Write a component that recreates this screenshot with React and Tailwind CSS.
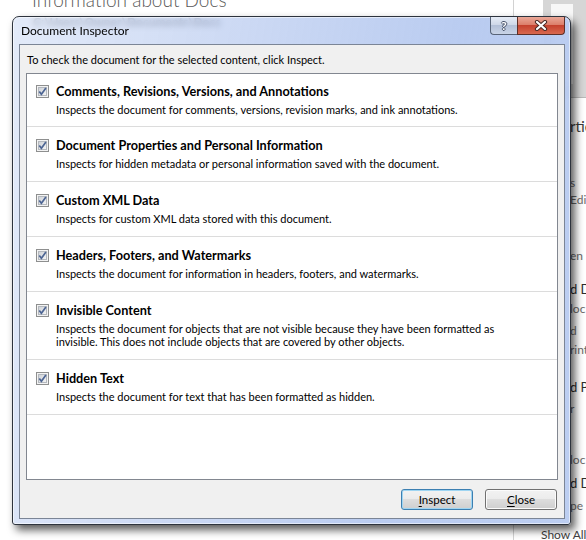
import React from 'react';

const items = [
  {
    title: 'Comments, Revisions, Versions, and Annotations',
    desc: ['Inspects the document for comments, versions, revision marks, and ink annotations.'],
  },
  {
    title: 'Document Properties and Personal Information',
    desc: ['Inspects for hidden metadata or personal information saved with the document.'],
  },
  {
    title: 'Custom XML Data',
    desc: ['Inspects for custom XML data stored with this document.'],
  },
  {
    title: 'Headers, Footers, and Watermarks',
    desc: ['Inspects the document for information in headers, footers, and watermarks.'],
  },
  {
    title: 'Invisible Content',
    desc: [
      'Inspects the document for objects that are not visible because they have been formatted as',
      'invisible. This does not include objects that are covered by other objects.',
    ],
  },
  {
    title: 'Hidden Text',
    desc: ['Inspects the document for text that has been formatted as hidden.'],
  },
];

// fragments of the backstage "Properties" column peeking out right of the dialog
const fragments = [
  { text: 'rtie', mt: 'mt-[20px]', cls: 'text-[15px] text-[#3c3c3c]' },
  { text: 's', mt: 'mt-[41px]', cls: 'text-[12px] text-[#6a6a6a]' },
  { text: 'Edi', mt: 'mt-[1px]', cls: 'text-[12px] text-[#6a6a6a]' },
  { text: 'en', mt: 'mt-[40px]', cls: 'text-[12px] text-[#6a6a6a]' },
  { text: 'd D', mt: 'mt-[17px]', cls: 'text-[13px] text-[#2e2e2e]' },
  { text: 'loc', mt: 'mt-[4px]', cls: 'text-[12px] text-[#6a6a6a]' },
  { text: 'd', mt: 'mt-[6px]', cls: 'text-[12px] text-[#6a6a6a]' },
  { text: 'rint', mt: 'mt-[3px]', cls: 'text-[12px] text-[#6a6a6a]' },
  { text: 'd P', mt: 'mt-[21px]', cls: 'text-[13px] text-[#2e2e2e]' },
  { text: 'r', mt: 'mt-[6px]', cls: 'text-[12px] text-[#6a6a6a]' },
  { text: 'loc', mt: 'mt-[35px]', cls: 'text-[12px] text-[#6a6a6a]' },
  { text: 'd D', mt: 'mt-[7px]', cls: 'text-[13px] text-[#2e2e2e]' },
  { text: 'pe', mt: 'mt-[7px]', cls: 'text-[12px] text-[#6a6a6a]' },
];

function CheckBox() {
  return (
    <svg width="13" height="13" viewBox="0 0 13 13" className="shrink-0">
      <defs>
        <linearGradient id="cbfill" x1="0" y1="0" x2="1" y2="1">
          <stop offset="0" stopColor="#cdd1d6" />
          <stop offset="1" stopColor="#f6f6f6" />
        </linearGradient>
      </defs>
      <rect x="0.5" y="0.5" width="12" height="12" fill="#f3f3f3" stroke="#8e8f8f" />
      <rect x="2.5" y="2.5" width="8" height="8" fill="url(#cbfill)" stroke="#b4b8be" />
      <path d="M3.3 6.4 L5.4 9.2 L9.9 3" fill="none" stroke="#4c6493" strokeWidth="1.7" />
    </svg>
  );
}

function WinButton({ label, underline, isDefault }) {
  return (
    <button
      className={`w-[72px] h-[21px] rounded-[3px] border text-[11.5px] leading-[19px] text-black bg-[linear-gradient(#f2f2f2,#ebebeb_50%,#dddddd_50%,#cfcfcf)] ${
        isDefault
          ? 'border-[#3c7fb1] shadow-[inset_0_0_0_1px_#9fd5f2]'
          : 'border-[#707070] shadow-[inset_0_0_0_1px_#fbfbfb]'
      }`}
    >
      <span className="underline underline-offset-[2px]">{underline}</span>
      {label}
    </button>
  );
}

export default function App() {
  return (
    <div className="relative w-[586px] h-[540px] overflow-hidden bg-white font-['Lato',sans-serif]">
      {/* Backstage page behind the dialog */}
      <div className="flex h-full">
        <div className="w-[513px] shrink-0 pl-[32px]">
          <div className="mt-[-12px] text-[19px] leading-[24px] font-light text-[#5a5a5a] whitespace-nowrap">
            Information about Docs
          </div>
          <div className="mt-[2px] pl-[1px] text-[12px] leading-[16px] font-bold text-[#333] whitespace-nowrap">
            C:\Users\Owner\Documents\Docs
          </div>
        </div>
        <div className="w-px shrink-0 bg-[#d2d2d2]" />
        <div className="flex-1 flex flex-col pl-[27px] whitespace-nowrap">
          <div className="ml-[2px] h-[98px] shrink-0 bg-[#d6d6d6] border-b border-[#b9b9b9] pt-[4px] pl-[8px]">
            <div className="w-[22px] h-[80px] bg-[#f7f7f7]" />
          </div>
          {fragments.map((f, i) => (
            <div key={i} className={`${f.mt} ml-[29px] h-[16px] leading-[16px] ${f.cls}`}>
              {f.text}
            </div>
          ))}
          <div className="mt-[13px] h-[16px] leading-[16px] text-[12px] text-[#3f3f3f] underline underline-offset-[2px]">
            Show All
          </div>
        </div>
      </div>

      {/* Document Inspector dialog */}
      <div className="absolute left-[12px] top-[16px] w-[559px] h-[509px] flex flex-col rounded-t-[7px] rounded-b-[3px] border border-[#2d333d] pl-[6px] pr-[5px] pb-[5px] backdrop-blur-[3px] bg-[linear-gradient(100deg,#d6e1f6b0,#bccdf0c0_35%,#afc4eedd_70%,#bccef1)] shadow-[inset_0_0_0_1px_rgba(255,255,255,0.55),4px_5px_9px_rgba(0,0,0,0.65)]">
        {/* title bar */}
        <div className="flex h-[27px] shrink-0">
          <div className="pl-[2px] pt-[6px] text-[12px] leading-[16px] text-black">Document Inspector</div>
          <div className="ml-auto flex h-[18px]">
            <div className="w-[27px] h-full flex items-center justify-center rounded-bl-[4px] border border-r-0 border-t-0 border-[#586478] bg-[linear-gradient(#e6ecf6,#cfd8e8_45%,#b3c0d7_50%,#c9d4e7)] text-[12px] font-bold leading-none text-white [text-shadow:1px_0_#47526a,-1px_0_#47526a,0_1px_#47526a,0_-1px_#47526a]">
              ?
            </div>
            <div className="w-[48px] h-full flex items-center justify-center rounded-br-[4px] border border-t-0 border-[#5e2f27] bg-[linear-gradient(#eaa898,#dc7f6b_45%,#c5412e_50%,#d8694f)]">
              <svg width="14" height="11" viewBox="0 0 14 11">
                <path d="M3 2 L11 9 M11 2 L3 9" stroke="#4a2a25" strokeWidth="4.2" strokeLinecap="round" />
                <path d="M3 2 L11 9 M11 2 L3 9" stroke="#ffffff" strokeWidth="2.2" strokeLinecap="round" />
              </svg>
            </div>
          </div>
        </div>

        {/* client area */}
        <div className="flex-1 flex flex-col border border-[#7b8596] bg-[#f0f0f0] text-[11px] text-black">
          <div className="pl-[7px] pt-[7px] leading-[16px]">
            To check the document for the selected content, click Inspect.
          </div>
          <div className="flex-1 mt-[5px] mx-[6px] border border-[#828790] bg-white">
            {items.map((item, i) => (
              <div
                key={item.title}
                className={`flex border-b border-[#dcdcdc] pl-[9px] ${
                  i === 0 ? 'pt-[9px] pb-[10px]' : 'pt-[10px] pb-[11px]'
                }`}
              >
                <div className="h-[16px] flex items-center">
                  <CheckBox />
                </div>
                <div className="ml-[7px] whitespace-nowrap">
                  <div className="h-[16px] leading-[16px] font-bold text-[12.7px]">{item.title}</div>
                  <div className="mt-[4px] leading-[13px]">
                    {item.desc.map((line) => (
                      <div key={line}>{line}</div>
                    ))}
                  </div>
                </div>
              </div>
            ))}
          </div>
          <div className="flex justify-end gap-[12px] mt-[9px] pr-[7px] pb-[8px]">
            <WinButton underline="I" label="nspect" isDefault />
            <WinButton underline="C" label="lose" />
          </div>
        </div>
      </div>
    </div>
  );
}
